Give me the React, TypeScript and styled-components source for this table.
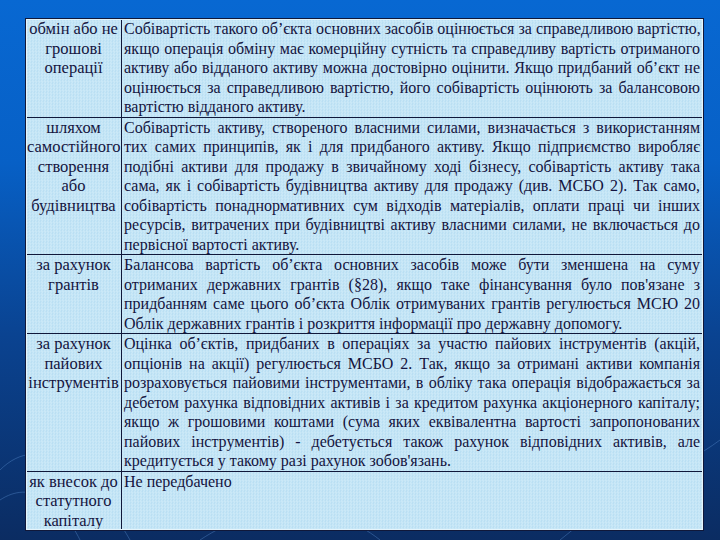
import { FC } from "react";
import styled, { createGlobalStyle } from "styled-components";

const GlobalStyle = createGlobalStyle`
    html, body {
        margin: 0;
        padding: 0;
    }
`;

type Row = {
    label: string[];
    text: string[];
};

const Rows: Row[] = [
    {
        label: ["обмін або не", "грошові", "операції"],
        text: [
            "Собівартість такого об’єкта основних засобів оцінюється за справедливою вартістю,",
            "якщо операція обміну має комерційну сутність та справедливу вартість отриманого",
            "активу або відданого активу можна достовірно оцінити. Якщо придбаний об’єкт не",
            "оцінюється за справедливою вартістю, його собівартість оцінюють за балансовою",
            "вартістю відданого активу.",
        ],
    },
    {
        label: ["шляхом", "самостійного", "створення", "або", "будівництва"],
        text: [
            "Собівартість активу, створеного власними силами, визначається з використанням",
            "тих самих принципів, як і для придбаного активу. Якщо підприємство виробляє",
            "подібні активи для продажу в звичайному ході бізнесу, собівартість активу така",
            "сама, як і собівартість будівництва активу для продажу (див. МСБО 2). Так само,",
            "собівартість понаднормативних сум відходів матеріалів, оплати праці чи інших",
            "ресурсів, витрачених при будівництві активу власними силами, не включається до",
            "первісної вартості активу.",
        ],
    },
    {
        label: ["за рахунок", "грантів"],
        text: [
            "Балансова вартість об’єкта основних засобів може бути зменшена на суму",
            "отриманих державних грантів (§28), якщо таке фінансування було пов'язане з",
            "придбанням саме цього об’єкта Облік отримуваних грантів регулюється МСЮ 20",
            "Облік державних грантів і розкриття інформації про державну допомогу.",
        ],
    },
    {
        label: ["за рахунок", "пайових", "інструментів"],
        text: [
            "Оцінка об’єктів, придбаних в операціях за участю пайових інструментів (акцій,",
            "опціонів на акції) регулюється МСБО 2. Так, якщо за отримані активи компанія",
            "розраховується пайовими інструментами, в обліку така операція відображається за",
            "дебетом рахунка відповідних активів і за кредитом рахунка акціонерного капіталу;",
            "якщо ж грошовими коштами (сума яких еквівалентна вартості запропонованих",
            "пайових інструментів) - дебетується також рахунок відповідних активів, але",
            "кредитується у такому разі рахунок зобов'язань.",
        ],
    },
    {
        label: ["як внесок до", "статутного", "капіталу"],
        text: ["Не передбачено"],
    },
];

const Slide = styled.div`
    position: relative;
    width: 720px;
    height: 540px;
    overflow: hidden;
    box-sizing: border-box;
    padding: 18px 16px 0 25px;
    background: linear-gradient(180deg, #0868d2 0%, #0760c6 30%, #0a4391 62%, #0b2c62 100%);
`;

const Swirls = styled.svg`
    position: absolute;
    left: 0;
    top: 0;
    pointer-events: none;
`;

const Table = styled.table`
    position: relative;
    width: 679px;
    border-collapse: collapse;
    table-layout: fixed;
    background-color: #c2e4f5;
    background-image: repeating-conic-gradient(#d2ecf9 0% 25%, #b2dbf1 0% 50%);
    background-size: 3px 3px;
    outline: 1px solid #e4f4fb;
    outline-offset: -2px;
    font-family: "Liberation Serif", "Times New Roman", serif;
    font-size: 16px;
    line-height: 19.5px;
    color: #141440;
`;

const LabelCol = styled.col`
    width: 96px;
`;

const Cell = styled.td<{ $label?: boolean }>`
    border: 1px solid #10183a;
    vertical-align: top;
    padding: ${({ $label }) => ($label ? "0 1px" : "0 3px 0 2px")};
    font-size: ${({ $label }) => ($label ? "16.5px" : "16px")};
    text-align: ${({ $label }) => ($label ? "center" : "left")};
`;

const Line = styled.span<{ $last: boolean }>`
    display: block;
    white-space: nowrap;
    text-align: ${({ $last }) => ($last ? "left" : "justify")};
    text-align-last: ${({ $last }) => ($last ? "left" : "justify")};
`;

const LabelLine = styled.span`
    display: block;
    white-space: nowrap;
`;

const App: FC = () => {
    return (
        <>
            <GlobalStyle />
            <Slide>
                <Swirls width="720" height="540" viewBox="0 0 720 540">
                    <g fill="none" stroke="#5a8fd0" strokeOpacity="0.4" strokeWidth="1">
                        <path d="M0 470 C 40 430, 90 470, 130 540" />
                        <path d="M0 500 C 30 480, 60 500, 80 540" />
                        <path d="M200 540 C 260 500, 330 500, 380 540" />
                        <path d="M560 540 C 620 490, 680 470, 720 440" />
                    </g>
                </Swirls>
                <Table>
                    <colgroup>
                        <LabelCol />
                        <col />
                    </colgroup>
                    <tbody>
                        {Rows.map((row, index) => (
                            <tr key={index}>
                                <Cell $label>
                                    {row.label.map((it, i) => (
                                        <LabelLine key={i}>{it}</LabelLine>
                                    ))}
                                </Cell>
                                <Cell>
                                    {row.text.map((it, i) => (
                                        <Line key={i} $last={i === row.text.length - 1}>
                                            {it}
                                        </Line>
                                    ))}
                                </Cell>
                            </tr>
                        ))}
                    </tbody>
                </Table>
            </Slide>
        </>
    );
};

export default App;
